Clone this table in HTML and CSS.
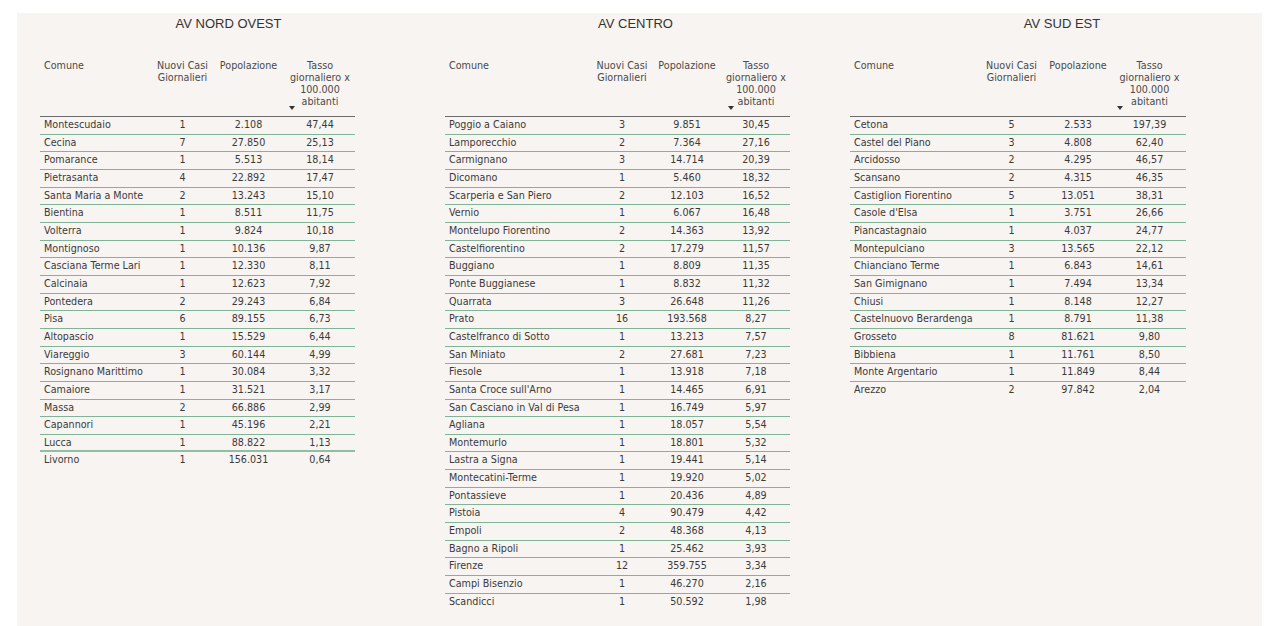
FILE: index.html
```html
<!DOCTYPE html>
<html lang="it">
<head>
<meta charset="utf-8">
<title>Tasso giornaliero per AV</title>
<link rel="stylesheet" href="styles.css">
</head>
<body>
<div class="panel">
  <section class="section s1">
    <h2 class="title">AV NORD OVEST</h2>
    <div class="tbl">
      <div class="thead">
        <div class="hc left">Comune</div>
        <div class="hc">Nuovi Casi<br>Giornalieri</div>
        <div class="hc">Popolazione</div>
        <div class="hc sort">Tasso<br>giornaliero x<br>100.000<br>abitanti<span class="arrow"></span></div>
      </div>
      <div class="row"><span class="c1">Montescudaio</span><span>1</span><span>2.108</span><span>47,44</span></div>
      <div class="row"><span class="c1">Cecina</span><span>7</span><span>27.850</span><span>25,13</span></div>
      <div class="row"><span class="c1">Pomarance</span><span>1</span><span>5.513</span><span>18,14</span></div>
      <div class="row"><span class="c1">Pietrasanta</span><span>4</span><span>22.892</span><span>17,47</span></div>
      <div class="row"><span class="c1">Santa Maria a Monte</span><span>2</span><span>13.243</span><span>15,10</span></div>
      <div class="row"><span class="c1">Bientina</span><span>1</span><span>8.511</span><span>11,75</span></div>
      <div class="row"><span class="c1">Volterra</span><span>1</span><span>9.824</span><span>10,18</span></div>
      <div class="row"><span class="c1">Montignoso</span><span>1</span><span>10.136</span><span>9,87</span></div>
      <div class="row"><span class="c1">Casciana Terme Lari</span><span>1</span><span>12.330</span><span>8,11</span></div>
      <div class="row"><span class="c1">Calcinaia</span><span>1</span><span>12.623</span><span>7,92</span></div>
      <div class="row"><span class="c1">Pontedera</span><span>2</span><span>29.243</span><span>6,84</span></div>
      <div class="row"><span class="c1">Pisa</span><span>6</span><span>89.155</span><span>6,73</span></div>
      <div class="row"><span class="c1">Altopascio</span><span>1</span><span>15.529</span><span>6,44</span></div>
      <div class="row"><span class="c1">Viareggio</span><span>3</span><span>60.144</span><span>4,99</span></div>
      <div class="row"><span class="c1">Rosignano Marittimo</span><span>1</span><span>30.084</span><span>3,32</span></div>
      <div class="row"><span class="c1">Camaiore</span><span>1</span><span>31.521</span><span>3,17</span></div>
      <div class="row"><span class="c1">Massa</span><span>2</span><span>66.886</span><span>2,99</span></div>
      <div class="row"><span class="c1">Capannori</span><span>1</span><span>45.196</span><span>2,21</span></div>
      <div class="row thick"><span class="c1">Lucca</span><span>1</span><span>88.822</span><span>1,13</span></div>
      <div class="row last"><span class="c1">Livorno</span><span>1</span><span>156.031</span><span>0,64</span></div>
    </div>
  </section>

  <section class="section s2">
    <h2 class="title">AV CENTRO</h2>
    <div class="tbl">
      <div class="thead">
        <div class="hc left">Comune</div>
        <div class="hc">Nuovi Casi<br>Giornalieri</div>
        <div class="hc">Popolazione</div>
        <div class="hc sort">Tasso<br>giornaliero x<br>100.000<br>abitanti<span class="arrow"></span></div>
      </div>
      <div class="row"><span class="c1">Poggio a Caiano</span><span>3</span><span>9.851</span><span>30,45</span></div>
      <div class="row"><span class="c1">Lamporecchio</span><span>2</span><span>7.364</span><span>27,16</span></div>
      <div class="row"><span class="c1">Carmignano</span><span>3</span><span>14.714</span><span>20,39</span></div>
      <div class="row"><span class="c1">Dicomano</span><span>1</span><span>5.460</span><span>18,32</span></div>
      <div class="row"><span class="c1">Scarperia e San Piero</span><span>2</span><span>12.103</span><span>16,52</span></div>
      <div class="row"><span class="c1">Vernio</span><span>1</span><span>6.067</span><span>16,48</span></div>
      <div class="row"><span class="c1">Montelupo Fiorentino</span><span>2</span><span>14.363</span><span>13,92</span></div>
      <div class="row"><span class="c1">Castelfiorentino</span><span>2</span><span>17.279</span><span>11,57</span></div>
      <div class="row"><span class="c1">Buggiano</span><span>1</span><span>8.809</span><span>11,35</span></div>
      <div class="row"><span class="c1">Ponte Buggianese</span><span>1</span><span>8.832</span><span>11,32</span></div>
      <div class="row"><span class="c1">Quarrata</span><span>3</span><span>26.648</span><span>11,26</span></div>
      <div class="row"><span class="c1">Prato</span><span>16</span><span>193.568</span><span>8,27</span></div>
      <div class="row"><span class="c1">Castelfranco di Sotto</span><span>1</span><span>13.213</span><span>7,57</span></div>
      <div class="row"><span class="c1">San Miniato</span><span>2</span><span>27.681</span><span>7,23</span></div>
      <div class="row"><span class="c1">Fiesole</span><span>1</span><span>13.918</span><span>7,18</span></div>
      <div class="row"><span class="c1">Santa Croce sull'Arno</span><span>1</span><span>14.465</span><span>6,91</span></div>
      <div class="row"><span class="c1">San Casciano in Val di Pesa</span><span>1</span><span>16.749</span><span>5,97</span></div>
      <div class="row"><span class="c1">Agliana</span><span>1</span><span>18.057</span><span>5,54</span></div>
      <div class="row"><span class="c1">Montemurlo</span><span>1</span><span>18.801</span><span>5,32</span></div>
      <div class="row"><span class="c1">Lastra a Signa</span><span>1</span><span>19.441</span><span>5,14</span></div>
      <div class="row"><span class="c1">Montecatini-Terme</span><span>1</span><span>19.920</span><span>5,02</span></div>
      <div class="row"><span class="c1">Pontassieve</span><span>1</span><span>20.436</span><span>4,89</span></div>
      <div class="row"><span class="c1">Pistoia</span><span>4</span><span>90.479</span><span>4,42</span></div>
      <div class="row"><span class="c1">Empoli</span><span>2</span><span>48.368</span><span>4,13</span></div>
      <div class="row"><span class="c1">Bagno a Ripoli</span><span>1</span><span>25.462</span><span>3,93</span></div>
      <div class="row"><span class="c1">Firenze</span><span>12</span><span>359.755</span><span>3,34</span></div>
      <div class="row"><span class="c1">Campi Bisenzio</span><span>1</span><span>46.270</span><span>2,16</span></div>
      <div class="row last"><span class="c1">Scandicci</span><span>1</span><span>50.592</span><span>1,98</span></div>
    </div>
  </section>

  <section class="section s3">
    <h2 class="title">AV SUD EST</h2>
    <div class="tbl">
      <div class="thead">
        <div class="hc left">Comune</div>
        <div class="hc">Nuovi Casi<br>Giornalieri</div>
        <div class="hc">Popolazione</div>
        <div class="hc sort">Tasso<br>giornaliero x<br>100.000<br>abitanti<span class="arrow"></span></div>
      </div>
      <div class="row"><span class="c1">Cetona</span><span>5</span><span>2.533</span><span>197,39</span></div>
      <div class="row"><span class="c1">Castel del Piano</span><span>3</span><span>4.808</span><span>62,40</span></div>
      <div class="row"><span class="c1">Arcidosso</span><span>2</span><span>4.295</span><span>46,57</span></div>
      <div class="row"><span class="c1">Scansano</span><span>2</span><span>4.315</span><span>46,35</span></div>
      <div class="row"><span class="c1">Castiglion Fiorentino</span><span>5</span><span>13.051</span><span>38,31</span></div>
      <div class="row"><span class="c1">Casole d'Elsa</span><span>1</span><span>3.751</span><span>26,66</span></div>
      <div class="row"><span class="c1">Piancastagnaio</span><span>1</span><span>4.037</span><span>24,77</span></div>
      <div class="row"><span class="c1">Montepulciano</span><span>3</span><span>13.565</span><span>22,12</span></div>
      <div class="row"><span class="c1">Chianciano Terme</span><span>1</span><span>6.843</span><span>14,61</span></div>
      <div class="row"><span class="c1">San Gimignano</span><span>1</span><span>7.494</span><span>13,34</span></div>
      <div class="row"><span class="c1">Chiusi</span><span>1</span><span>8.148</span><span>12,27</span></div>
      <div class="row"><span class="c1">Castelnuovo Berardenga</span><span>1</span><span>8.791</span><span>11,38</span></div>
      <div class="row"><span class="c1">Grosseto</span><span>8</span><span>81.621</span><span>9,80</span></div>
      <div class="row"><span class="c1">Bibbiena</span><span>1</span><span>11.761</span><span>8,50</span></div>
      <div class="row"><span class="c1">Monte Argentario</span><span>1</span><span>11.849</span><span>8,44</span></div>
      <div class="row last"><span class="c1">Arezzo</span><span>2</span><span>97.842</span><span>2,04</span></div>
    </div>
  </section>
</div>
</body>
</html>
```

FILE: styles.css
```css
html, body {
  margin: 0;
  padding: 0;
  background: #ffffff;
}

body {
  font-family: "DejaVu Sans", Verdana, sans-serif;
  font-size: 9.6px;
  color: #3a3a3a;
}

.panel {
  display: flex;
  margin: 13px 18px 0 17px;
  height: 613px;
  background: #f8f4f1;
}

.section {
  width: 415px;
  flex: none;
}

.title {
  margin: 3px 0 0 0;
  font-family: "Liberation Sans", Arial, sans-serif;
  font-weight: normal;
  font-size: 13px;
  line-height: 16px;
  color: #333333;
  text-align: center;
}

.s1 .title { padding-left: 8px; }
.s2 .title { padding-right: 8px; }
.s3 .title { padding-left: 15px; }

.tbl {
  margin-top: 28px;
}

.s1 .tbl { margin-left: 23px; width: 315px; }
.s2 .tbl { margin-left: 13px; width: 345px; }
.s3 .tbl { margin-left: 3px; width: 336px; }

.s1 .thead, .s1 .row { grid-template-columns: 113px 59px 73px 70px; }
.s2 .thead, .s2 .row { grid-template-columns: 147px 60px 70px 68px; }
.s3 .thead, .s3 .row { grid-template-columns: 130px 63px 70px 73px; }

.thead {
  display: grid;
  height: 57px;
  box-sizing: border-box;
  border-bottom: 1px solid #6b6b6b;
  color: #4a4a4a;
  line-height: 12px;
}

.hc {
  text-align: center;
  white-space: nowrap;
}

.hc.left {
  text-align: left;
  padding-left: 4px;
}

.sort {
  position: relative;
}

.arrow {
  position: absolute;
  left: 4px;
  bottom: 6px;
  width: 0;
  height: 0;
  border-left: 3px solid transparent;
  border-right: 3px solid transparent;
  border-top: 4px solid #333333;
}

.s2 .arrow { left: 6px; }

.row {
  display: grid;
  height: 17.67px;
  box-sizing: border-box;
  border-bottom: 1px solid #7fb596;
  line-height: 16.67px;
  text-align: center;
  white-space: nowrap;
}

.row.thick {
  border-bottom: 2px solid #8fbfa3;
}

.row.last {
  border-bottom: none;
}

.row .c1 {
  text-align: left;
  padding-left: 4px;
  overflow: hidden;
}
```
